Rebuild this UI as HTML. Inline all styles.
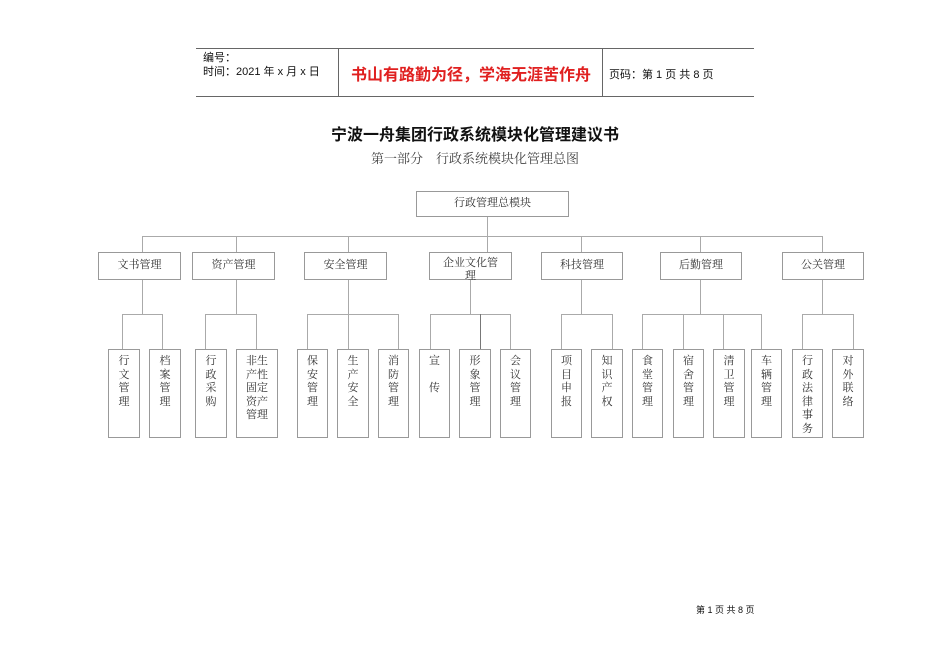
<!DOCTYPE html>
<html><head><meta charset="utf-8"><style>
*{margin:0;padding:0;box-sizing:border-box}
body{width:950px;height:672px;background:#fff;position:relative;overflow:hidden;font-family:"Liberation Serif","Noto Serif CJK SC",serif;color:#333}
.a{position:absolute}
.b{position:absolute;border:1px solid #999;background:#fff;font-size:11px;text-align:center}
.l{position:absolute;display:flex;flex-direction:column;align-items:center;padding-top:5px;line-height:13.6px;font-size:11px}
svg{position:absolute;left:0;top:0}
</style></head><body>
<svg width="950" height="672" stroke="#aaa" stroke-width="1" fill="none">
<line x1="196" y1="48.5" x2="754" y2="48.5" stroke="#666"/>
<line x1="196" y1="96.5" x2="754" y2="96.5" stroke="#666"/>
<line x1="338.5" y1="48" x2="338.5" y2="96" stroke="#666"/>
<line x1="602.5" y1="48" x2="602.5" y2="96" stroke="#666"/>
<line x1="487.5" y1="216" x2="487.5" y2="236"/>
<line x1="142" y1="236.5" x2="822" y2="236.5"/>
<g>
<line x1="142.5" y1="236" x2="142.5" y2="314"/>
<line x1="236.5" y1="236" x2="236.5" y2="314"/>
<line x1="348.5" y1="236" x2="348.5" y2="314"/>
<line x1="470.5" y1="279" x2="470.5" y2="314"/>
<line x1="487.5" y1="236" x2="487.5" y2="252"/>
<line x1="581.5" y1="236" x2="581.5" y2="314"/>
<line x1="700.5" y1="236" x2="700.5" y2="314"/>
<line x1="822.5" y1="236" x2="822.5" y2="314"/>
</g>
<line x1="122" y1="314.5" x2="162" y2="314.5"/>
<line x1="205" y1="314.5" x2="256" y2="314.5"/>
<line x1="307" y1="314.5" x2="398" y2="314.5"/>
<line x1="430" y1="314.5" x2="510" y2="314.5"/>
<line x1="561" y1="314.5" x2="612" y2="314.5"/>
<line x1="642" y1="314.5" x2="761" y2="314.5"/>
<line x1="802" y1="314.5" x2="853" y2="314.5"/>
<g>
<line x1="122.5" y1="314" x2="122.5" y2="349"/><line x1="162.5" y1="314" x2="162.5" y2="349"/>
<line x1="205.5" y1="314" x2="205.5" y2="349"/><line x1="256.5" y1="314" x2="256.5" y2="349"/>
<line x1="307.5" y1="314" x2="307.5" y2="349"/><line x1="348.5" y1="314" x2="348.5" y2="349"/><line x1="398.5" y1="314" x2="398.5" y2="349"/>
<line x1="430.5" y1="314" x2="430.5" y2="349"/><line x1="480.5" y1="314" x2="480.5" y2="349" stroke="#777"/><line x1="510.5" y1="314" x2="510.5" y2="349"/>
<line x1="561.5" y1="314" x2="561.5" y2="349"/><line x1="612.5" y1="314" x2="612.5" y2="349"/>
<line x1="642.5" y1="314" x2="642.5" y2="349"/><line x1="683.5" y1="314" x2="683.5" y2="349"/><line x1="723.5" y1="314" x2="723.5" y2="349"/><line x1="761.5" y1="314" x2="761.5" y2="349"/>
<line x1="802.5" y1="314" x2="802.5" y2="349"/><line x1="853.5" y1="314" x2="853.5" y2="349"/>
</g>
</svg>
<div class="a" style="left:203px;top:51px;font-size:11px;line-height:14px;color:#111;font-family:'Liberation Sans','Noto Sans CJK SC',sans-serif">编号：<br>时间：2021 年 x 月 x 日</div>
<div class="a" style="left:340px;top:61px;width:262px;text-align:center;font-size:16px;font-weight:bold;color:#e02020;font-family:'Liberation Sans','Noto Sans CJK SC',sans-serif">书山有路勤为径，学海无涯苦作舟</div>
<div class="a" style="left:609px;top:66px;font-size:11px;color:#111;font-family:'Liberation Sans','Noto Sans CJK SC',sans-serif">页码：第 1 页 共 8 页</div>
<div class="a" style="left:0;top:121px;width:950px;text-align:center;font-size:16px;font-weight:bold;color:#111;font-family:'Liberation Sans','Noto Sans CJK SC',sans-serif">宁波一舟集团行政系统模块化管理建议书</div>
<div class="a" style="left:0;top:148px;width:950px;text-align:center;font-size:13px;color:#444">第一部分　行政系统模块化管理总图</div>
<div class="b" style="left:416px;top:191px;width:153px;height:26px;line-height:22px">行政管理总模块</div>
<div class="b" style="left:98px;top:252px;width:83px;height:28px;line-height:24px">文书管理</div>
<div class="b" style="left:192px;top:252px;width:83px;height:28px;line-height:24px">资产管理</div>
<div class="b" style="left:304px;top:252px;width:83px;height:28px;line-height:24px">安全管理</div>
<div class="b" style="left:429px;top:252px;width:83px;height:28px;line-height:13px;padding-top:4px">企业文化管<br>理</div>
<div class="b" style="left:541px;top:252px;width:82px;height:28px;line-height:24px">科技管理</div>
<div class="b" style="left:660px;top:252px;width:82px;height:28px;line-height:24px">后勤管理</div>
<div class="b" style="left:782px;top:252px;width:82px;height:28px;line-height:24px">公关管理</div>

<div class="b l" style="left:108px;top:349px;width:32px;height:89px">行<br>文<br>管<br>理</div>
<div class="b l" style="left:149px;top:349px;width:32px;height:89px">档<br>案<br>管<br>理</div>
<div class="b l" style="left:195px;top:349px;width:32px;height:89px">行<br>政<br>采<br>购</div>
<div class="b l" style="left:236px;top:349px;width:42px;height:89px">非生<br>产性<br>固定<br>资产<br>管理</div>
<div class="b l" style="left:297px;top:349px;width:31px;height:89px">保<br>安<br>管<br>理</div>
<div class="b l" style="left:337px;top:349px;width:32px;height:89px">生<br>产<br>安<br>全</div>
<div class="b l" style="left:378px;top:349px;width:31px;height:89px">消<br>防<br>管<br>理</div>
<div class="b l" style="left:419px;top:349px;width:31px;height:89px">宣<br><br>传</div>
<div class="b l" style="left:459px;top:349px;width:32px;height:89px">形<br>象<br>管<br>理</div>
<div class="b l" style="left:500px;top:349px;width:31px;height:89px">会<br>议<br>管<br>理</div>
<div class="b l" style="left:551px;top:349px;width:31px;height:89px">项<br>目<br>申<br>报</div>
<div class="b l" style="left:591px;top:349px;width:32px;height:89px">知<br>识<br>产<br>权</div>
<div class="b l" style="left:632px;top:349px;width:31px;height:89px">食<br>堂<br>管<br>理</div>
<div class="b l" style="left:673px;top:349px;width:31px;height:89px">宿<br>舍<br>管<br>理</div>
<div class="b l" style="left:713px;top:349px;width:32px;height:89px">清<br>卫<br>管<br>理</div>
<div class="b l" style="left:751px;top:349px;width:31px;height:89px">车<br>辆<br>管<br>理</div>
<div class="b l" style="left:792px;top:349px;width:31px;height:89px">行<br>政<br>法<br>律<br>事<br>务</div>
<div class="b l" style="left:832px;top:349px;width:32px;height:89px">对<br>外<br>联<br>络</div>
<div class="a" style="left:696px;top:603px;font-size:9px;color:#111;font-family:'Liberation Sans','Noto Sans CJK SC',sans-serif">第 1 页 共 8 页</div>
</body></html>
